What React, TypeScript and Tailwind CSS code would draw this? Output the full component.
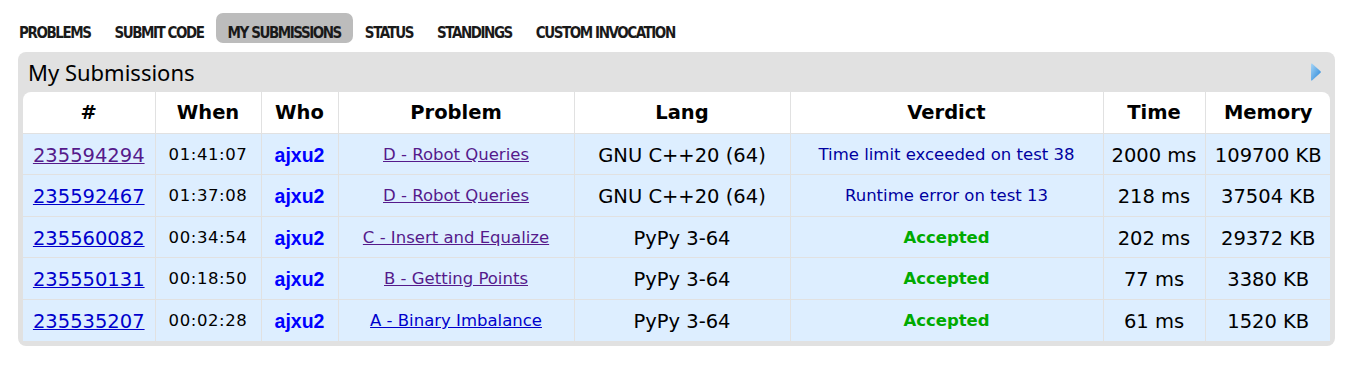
import React from 'react';

type Row = {
  id: string;
  idVisited: boolean;
  when: string;
  problem: string;
  problemVisited: boolean;
  lang: string;
  verdict: string;
  ok: boolean;
  time: string;
  memory: string;
};

const rows: Row[] = [
  { id: '235594294', idVisited: true, when: '01:41:07', problem: 'D - Robot Queries', problemVisited: true, lang: 'GNU C++20 (64)', verdict: 'Time limit exceeded on test 38', ok: false, time: '2000 ms', memory: '109700 KB' },
  { id: '235592467', idVisited: false, when: '01:37:08', problem: 'D - Robot Queries', problemVisited: true, lang: 'GNU C++20 (64)', verdict: 'Runtime error on test 13', ok: false, time: '218 ms', memory: '37504 KB' },
  { id: '235560082', idVisited: false, when: '00:34:54', problem: 'C - Insert and Equalize', problemVisited: true, lang: 'PyPy 3-64', verdict: 'Accepted', ok: true, time: '202 ms', memory: '29372 KB' },
  { id: '235550131', idVisited: false, when: '00:18:50', problem: 'B - Getting Points', problemVisited: true, lang: 'PyPy 3-64', verdict: 'Accepted', ok: true, time: '77 ms', memory: '3380 KB' },
  { id: '235535207', idVisited: false, when: '00:02:28', problem: 'A - Binary Imbalance', problemVisited: false, lang: 'PyPy 3-64', verdict: 'Accepted', ok: true, time: '61 ms', memory: '1520 KB' },
];

const menu = ['PROBLEMS', 'SUBMIT CODE', 'MY SUBMISSIONS', 'STATUS', 'STANDINGS', 'CUSTOM INVOCATION'];

function ArrowIcon() {
  return (
    <svg width="12" height="20" viewBox="0 0 12 20">
      <defs>
        <linearGradient id="arr" x1="0" y1="0" x2="1" y2="1">
          <stop offset="0" stopColor="#a8d6f7" />
          <stop offset="1" stopColor="#2585d8" />
        </linearGradient>
      </defs>
      <path d="M2,1.5 Q1,1 1,2.5 L1,17.5 Q1,19 2,18.5 L10.5,10.8 Q11.3,10 10.5,9.2 Z" fill="url(#arr)" />
    </svg>
  );
}

export default function App() {
  const cell = 'border border-[#e1e1e1] text-center align-middle px-1';
  return (
    <div className="w-[1349px] h-[371px] bg-white font-['DejaVu_Sans',Verdana,sans-serif] text-black">
      {/* second level menu */}
      <ul className="flex pt-[13px] pl-[7px] h-[43px] font-['DejaVu_Sans_Condensed',sans-serif] font-bold text-[15px] tracking-[-1.45px] text-[#1a1a1a]">
        {menu.map((m) => (
          <li key={m}>
            <a className={`block h-[30px] pt-[12px] leading-[17px] px-3 rounded-[7px] ${m === 'MY SUBMISSIONS' ? 'bg-[#bcbcbc]' : ''}`}>{m}</a>
          </li>
        ))}
      </ul>

      <div className="mx-[18px] mt-[9px] w-[1317px] bg-[#e1e1e1] rounded-[8px] px-[5px] pb-[5px]">
        <div className="flex items-center justify-between h-[40px] pl-[5px] pr-[8px]">
          <span className="font-['Noto_Sans',sans-serif] text-[22px] leading-none">My Submissions</span>
          <ArrowIcon />
        </div>
        <div className="bg-white rounded-t-[8px] overflow-hidden">
          <table className="w-[1308px] border-collapse table-fixed">
            <colgroup>
              <col className="w-[132px]" />
              <col className="w-[106px]" />
              <col className="w-[77px]" />
              <col className="w-[236px]" />
              <col className="w-[216px]" />
              <col className="w-[313px]" />
              <col className="w-[102px]" />
              <col className="w-[126px]" />
            </colgroup>
            <thead>
              <tr className="h-[41px] text-[19.5px] font-bold">
                {['#', 'When', 'Who', 'Problem', 'Lang', 'Verdict', 'Time', 'Memory'].map((h) => (
                  <th key={h} className={`${cell} border-t-0 first:border-l-0 last:border-r-0`}>{h}</th>
                ))}
              </tr>
            </thead>
            <tbody>
              {rows.map((r, i) => {
                const last = i === rows.length - 1 ? 'border-b-0' : '';
                return (
                  <tr key={r.id} className="h-[41.5px] bg-[#ddeeff] text-[19.5px]">
                    <td className={`${cell} border-l-0 pt-[3px] ${last}`}>
                      <a className={`underline ${r.idVisited ? 'text-[#551a8b]' : 'text-[#0000cc]'}`}>{r.id}</a>
                    </td>
                    <td className={`${cell} text-[16.5px] tracking-[0.6px] pt-[3px] ${last}`}>{r.when}</td>
                    <td className={`${cell} pt-[3px] ${last}`}>
                      <a className="font-['Liberation_Sans',Arial,sans-serif] font-bold text-[#0000ff]">ajxu2</a>
                    </td>
                    <td className={`${cell} text-[16.5px] pt-[3px] ${last}`}>
                      <a className={`underline ${r.problemVisited ? 'text-[#551a8b]' : 'text-[#0000cc]'}`}>{r.problem}</a>
                    </td>
                    <td className={`${cell} pt-[3px] ${last}`}>{r.lang}</td>
                    <td className={`${cell} text-[16.5px] pt-[3px] ${last}`}>
                      {r.ok ? (
                        <span className="font-bold text-[#00aa00]">{r.verdict}</span>
                      ) : (
                        <span className="text-[#0000a0]">{r.verdict}</span>
                      )}
                    </td>
                    <td className={`${cell} pt-[3px] ${last}`}>{r.time}</td>
                    <td className={`${cell} border-r-0 pt-[3px] ${last}`}>{r.memory}</td>
                  </tr>
                );
              })}
            </tbody>
          </table>
        </div>
      </div>
    </div>
  );
}
